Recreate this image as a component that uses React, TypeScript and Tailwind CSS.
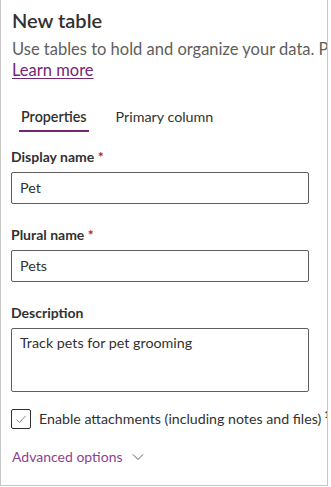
import React from "react";

export default function App() {
  return (
    <div className="w-[331px] h-[487px] bg-white" style={{ fontFamily: 'Lato, "Open Sans", sans-serif' }}>
      <div className="w-[328px] h-[486px] border-l border-r border-b border-[#c8c8c8] overflow-hidden text-[#323130]">
        <div className="pl-[11px] pt-[6px]">
          <h1 className="text-[20px] leading-[28px] font-semibold whitespace-nowrap">New table</h1>
          <div className="mt-[5px] text-[16.5px] leading-[21px] text-[#605e5c] whitespace-nowrap">
            Use tables to hold and organize your data. Provide a name and description.
          </div>
          <div className="text-[16.5px] leading-[21px]">
            <a className="text-[#742774] underline underline-offset-[2px]">Learn more</a>
          </div>
        </div>
        <div className="mt-[26px] flex pl-[18px] gap-[27px] text-[14.3px]">
          <div className="flex flex-col items-center">
            <span className="px-[2px] leading-[20px] font-semibold">Properties</span>
            <div className="mt-[3px] h-[2px] w-full bg-[#742774]" />
          </div>
          <div className="flex flex-col">
            <span className="leading-[20px]">Primary column</span>
          </div>
        </div>
        <div className="px-[10px] mt-[10px] w-[318px]">
          <div className="py-[5px] text-[14px] leading-[20px] font-bold">
            Display name <span className="text-[#a4262c]">*</span>
          </div>
          <div className="h-[32px] border border-[#605e5c] rounded-[2px] flex items-center px-[8px] text-[14.3px]">Pet</div>
          <div className="mt-[16px] py-[5px] text-[14px] leading-[20px] font-bold">
            Plural name <span className="text-[#a4262c]">*</span>
          </div>
          <div className="h-[32px] border border-[#605e5c] rounded-[2px] flex items-center px-[8px] text-[14.3px]">Pets</div>
          <div className="mt-[16px] py-[5px] text-[14px] leading-[20px] font-bold">Description</div>
          <div className="h-[64px] border border-[#605e5c] rounded-[2px] px-[8px] pt-[4px] text-[14.3px] leading-[20px]">
            Track pets for pet grooming
          </div>
          <div className="mt-[17px] flex items-center whitespace-nowrap">
            <div className="w-[20px] h-[20px] border border-[#323130] rounded-[2px] flex items-center justify-center shrink-0">
              <svg width="12" height="12" viewBox="0 0 12 12" fill="none">
                <path d="M1.5 6.5 L4.5 9.5 L10.5 3" stroke="#8a8886" strokeWidth="1" />
              </svg>
            </div>
            <span className="ml-[8px] text-[14.2px] leading-[20px]">
              Enable attachments (including notes and files)
            </span>
            <sup className="ml-[3px] text-[9px]">1</sup>
          </div>
          <div className="mt-[18px] flex items-center text-[14px] leading-[20px] text-[#8f3f91] pl-[1px]">
            Advanced options
            <svg className="ml-[9px]" width="12" height="8" viewBox="0 0 12 8" fill="none">
              <path d="M1 1.5 L6 6.5 L11 1.5" stroke="#605e5c" strokeWidth="1" />
            </svg>
          </div>
        </div>
      </div>
    </div>
  );
}
